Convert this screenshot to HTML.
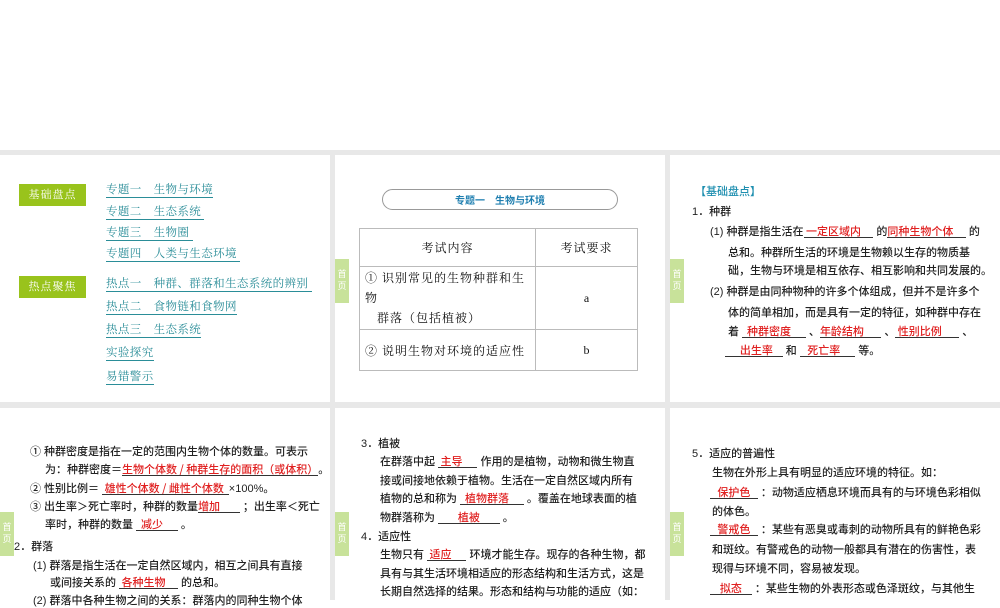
<!DOCTYPE html>
<html><head><meta charset="utf-8"><style>
*{margin:0;padding:0;box-sizing:border-box}
body{width:1000px;height:600px;background:#fff;position:relative;overflow:hidden;font-family:"Liberation Serif","Noto Serif CJK SC",serif;color:#111}
.bg{position:absolute;left:0;top:150px;width:1000px;height:450px;background:#e8e8e8}
.p{position:absolute;background:#fff}
.t{position:absolute;white-space:nowrap;font-size:11px;line-height:14px;font-family:"Liberation Sans","Noto Sans CJK SC",sans-serif;font-weight:500;color:#222}
.tab{position:absolute;width:14px;height:44px;background:#c8e29a;color:#fff;font-size:9px;line-height:12px;text-align:center;padding-top:9px;font-family:"Noto Sans CJK SC",sans-serif}
.g{position:absolute;left:19px;width:67px;height:22px;background:#99c31c;color:#fff;font-size:11px;line-height:22px;text-align:center;letter-spacing:1px}
.l{position:absolute;left:106px;color:#2a8d98;font-size:11.5px;border-bottom:1px solid #2a8d98;line-height:13px;letter-spacing:0.4px;white-space:nowrap}
.r{color:#e02020;display:inline-block;border-bottom:1px solid #333;line-height:12px;font-family:"Noto Sans CJK SC",sans-serif}
table{position:absolute;left:359px;top:228px;border-collapse:collapse;font-size:12px}
td{border:1px solid #bbb;padding:0 5px}
</style></head><body>
<div class="bg"></div>
<div class="p" style="left:0;top:155px;width:330px;height:247px"></div>
<div class="p" style="left:335px;top:155px;width:330px;height:247px"></div>
<div class="p" style="left:670px;top:155px;width:330px;height:247px"></div>
<div class="p" style="left:0;top:408px;width:330px;height:192px"></div>
<div class="p" style="left:335px;top:408px;width:330px;height:192px"></div>
<div class="p" style="left:670px;top:408px;width:330px;height:192px"></div>

<div class="g" style="top:184px">基础盘点</div>
<div class="g" style="top:276px">热点聚焦</div>
<div class="l" style="top:184px">专题一　生物与环境</div>
<div class="l" style="top:206px">专题二　生态系统&nbsp;</div>
<div class="l" style="top:227px">专题三　生物圈&nbsp;</div>
<div class="l" style="top:248px">专题四　人类与生态环境&nbsp;</div>
<div class="l" style="top:278px">热点一　种群、群落和生态系统的辨别&nbsp;</div>
<div class="l" style="top:301px">热点二　食物链和食物网</div>
<div class="l" style="top:324px">热点三　生态系统</div>
<div class="l" style="top:347px">实验探究</div>
<div class="l" style="top:371px">易错警示</div>

<div style="position:absolute;left:382px;top:189px;width:236px;height:21px;border:1px solid #999;border-radius:11px;text-align:center;font-size:10px;line-height:19px;color:#1f7fb0;font-weight:bold;font-family:'Noto Sans CJK SC',sans-serif">专题一　生物与环境</div>
<table>
<tr style="height:38px"><td style="width:176px;text-align:center;letter-spacing:1px">考试内容</td><td style="width:102px;text-align:center;letter-spacing:1px">考试要求</td></tr>
<tr style="height:63px"><td style="line-height:20px;letter-spacing:1px">① 识别常见的生物种群和生物<br>&nbsp;&nbsp;&nbsp;群落（包括植被）</td><td style="text-align:center">a</td></tr>
<tr style="height:41px"><td style="letter-spacing:1px">② 说明生物对环境的适应性</td><td style="text-align:center">b</td></tr>
</table>

<div class="t" style="left:695px;top:185px;color:#1f8fb0">【基础盘点】</div>
<div class="t" style="left:692px;top:205px">1．种群</div>
<div class="t" style="left:710px;top:225px">(1) 种群是指生活在<span class="r">&nbsp;一定区域内&nbsp;&nbsp;&nbsp;&nbsp;&nbsp;</span> 的<span class="r">同种生物个体&nbsp;&nbsp;&nbsp;&nbsp;&nbsp;</span> 的</div>
<div class="t" style="left:728px;top:246px">总和。种群所生活的环境是生物赖以生存的物质基</div>
<div class="t" style="left:728px;top:264px">础，生物与环境是相互依存、相互影响和共同发展的。</div>
<div class="t" style="left:710px;top:285px">(2) 种群是由同种物种的许多个体组成，但并不是许多个</div>
<div class="t" style="left:728px;top:306px">体的简单相加，而是具有一定的特征，如种群中存在</div>
<div class="t" style="left:728px;top:325px">着 <span class="r">&nbsp;&nbsp;种群密度&nbsp;&nbsp;&nbsp;&nbsp;&nbsp;&nbsp;</span> 、<span class="r">年龄结构&nbsp;&nbsp;&nbsp;&nbsp;&nbsp;&nbsp;&nbsp;</span> 、<span class="r">&nbsp;性别比例&nbsp;&nbsp;&nbsp;&nbsp;&nbsp;&nbsp;&nbsp;</span> 、</div>
<div class="t" style="left:725px;top:344px"><span class="r">&nbsp;&nbsp;&nbsp;&nbsp;&nbsp;&nbsp;出生率&nbsp;&nbsp;&nbsp;&nbsp;</span> 和 <span class="r">&nbsp;&nbsp;&nbsp;死亡率&nbsp;&nbsp;&nbsp;&nbsp;&nbsp;&nbsp;</span> 等。</div>

<div class="t" style="left:30px;top:445px">① 种群密度是指在一定的范围内生物个体的数量。可表示</div>
<div class="t" style="left:45px;top:463px">为：种群密度＝<span class="r">生物个体数 / 种群生存的面积（或体积）</span>。</div>
<div class="t" style="left:30px;top:482px">② 性别比例＝ <span class="r">&nbsp;雄性个体数 / 雌性个体数&nbsp;&nbsp;</span>×100%。</div>
<div class="t" style="left:30px;top:500px">③ 出生率＞死亡率时，种群的数量<span class="r">增加&nbsp;&nbsp;&nbsp;&nbsp;&nbsp;&nbsp;&nbsp;&nbsp;</span> ；出生率＜死亡</div>
<div class="t" style="left:45px;top:518px">率时，种群的数量 <span class="r">&nbsp;&nbsp;减少&nbsp;&nbsp;&nbsp;&nbsp;&nbsp;&nbsp;</span> 。</div>
<div class="t" style="left:14px;top:540px">2．群落</div>
<div class="t" style="left:33px;top:559px">(1) 群落是指生活在一定自然区域内，相互之间具有直接</div>
<div class="t" style="left:50px;top:576px">或间接关系的 <span class="r">&nbsp;各种生物&nbsp;&nbsp;&nbsp;&nbsp;&nbsp;</span> 的总和。</div>
<div class="t" style="left:33px;top:594px">(2) 群落中各种生物之间的关系：群落内的同种生物个体</div>

<div class="t" style="left:361px;top:437px">3．植被</div>
<div class="t" style="left:380px;top:455px">在群落中起 <span class="r">&nbsp;主导&nbsp;&nbsp;&nbsp;&nbsp;&nbsp;&nbsp;</span> 作用的是植物，动物和微生物直</div>
<div class="t" style="left:380px;top:474px">接或间接地依赖于植物。生活在一定自然区域内所有</div>
<div class="t" style="left:380px;top:492px">植物的总和称为 <span class="r">&nbsp;&nbsp;植物群落&nbsp;&nbsp;&nbsp;&nbsp;&nbsp;&nbsp;</span> 。覆盖在地球表面的植</div>
<div class="t" style="left:380px;top:511px">物群落称为 <span class="r">&nbsp;&nbsp;&nbsp;&nbsp;&nbsp;&nbsp;&nbsp;&nbsp;植被&nbsp;&nbsp;&nbsp;&nbsp;&nbsp;&nbsp;&nbsp;&nbsp;</span> 。</div>
<div class="t" style="left:361px;top:530px">4．适应性</div>
<div class="t" style="left:380px;top:548px">生物只有 <span class="r">&nbsp;适应&nbsp;&nbsp;&nbsp;&nbsp;&nbsp;&nbsp;</span> 环境才能生存。现存的各种生物，都</div>
<div class="t" style="left:380px;top:567px">具有与其生活环境相适应的形态结构和生活方式，这是</div>
<div class="t" style="left:380px;top:585px">长期自然选择的结果。形态和结构与功能的适应（如：</div>

<div class="t" style="left:692px;top:447px">5．适应的普遍性</div>
<div class="t" style="left:712px;top:466px">生物在外形上具有明显的适应环境的特征。如：</div>
<div class="t" style="left:710px;top:486px"><span class="r">&nbsp;&nbsp;&nbsp;保护色&nbsp;&nbsp;&nbsp;</span> ：动物适应栖息环境而具有的与环境色彩相似</div>
<div class="t" style="left:712px;top:505px">的体色。</div>
<div class="t" style="left:710px;top:523px"><span class="r">&nbsp;&nbsp;&nbsp;警戒色&nbsp;&nbsp;&nbsp;</span> ：某些有恶臭或毒刺的动物所具有的鲜艳色彩</div>
<div class="t" style="left:712px;top:543px">和斑纹。有警戒色的动物一般都具有潜在的伤害性，表</div>
<div class="t" style="left:712px;top:562px">现得与环境不同，容易被发现。</div>
<div class="t" style="left:710px;top:582px"><span class="r">&nbsp;&nbsp;&nbsp;&nbsp;拟态&nbsp;&nbsp;&nbsp;&nbsp;</span> ：某些生物的外表形态或色泽斑纹，与其他生</div>

<div class="tab" style="left:335px;top:259px">首<br>页</div>
<div class="tab" style="left:670px;top:259px">首<br>页</div>
<div class="tab" style="left:0;top:512px">首<br>页</div>
<div class="tab" style="left:335px;top:512px">首<br>页</div>
<div class="tab" style="left:670px;top:512px">首<br>页</div>
</body></html>
